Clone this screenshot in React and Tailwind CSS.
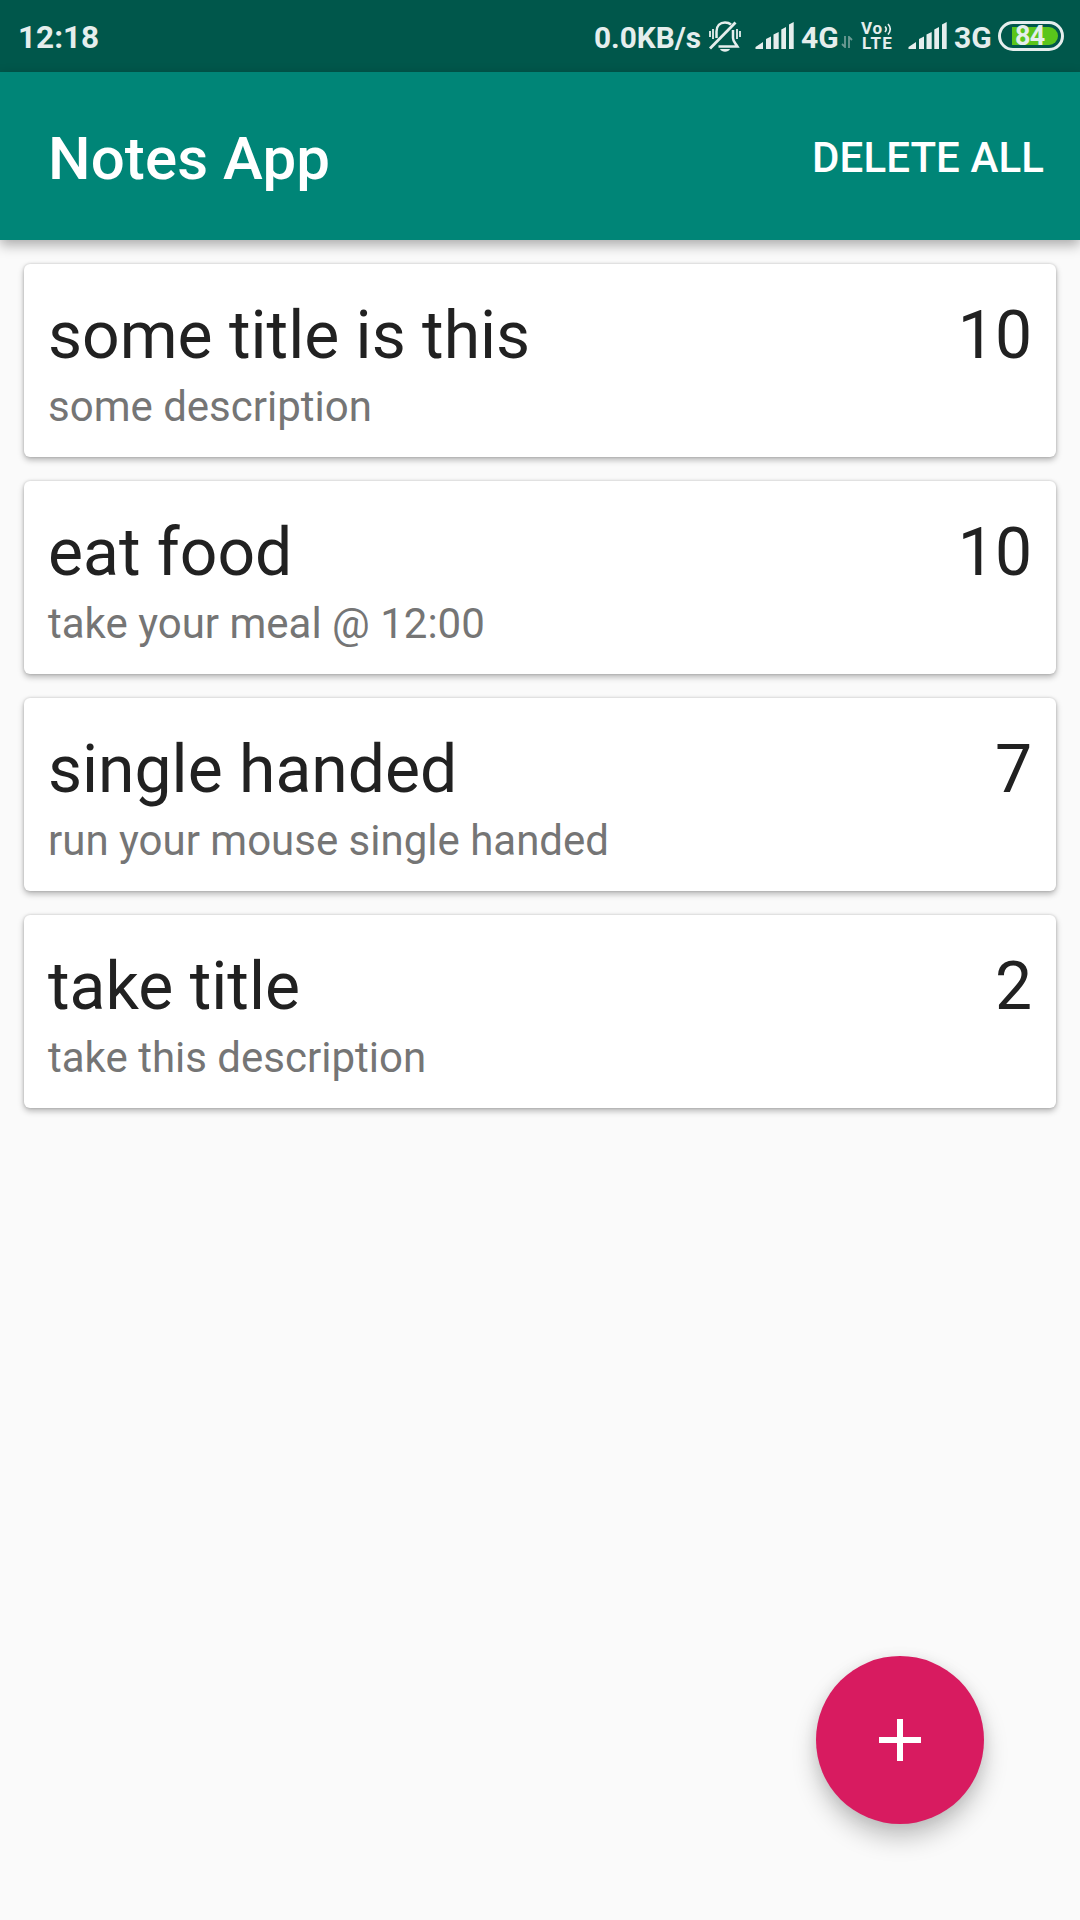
const notes = [
  { title: "some title is this", description: "some description", priority: 10 },
  { title: "eat food", description: "take your meal @ 12:00", priority: 10 },
  { title: "single handed", description: "run your mouse single handed", priority: 7 },
  { title: "take title", description: "take this description", priority: 2 },
];

function MutedBell() {
  return (
    <svg className="h-8 w-[34px]" viewBox="0 0 34 32" fill="none" stroke="#e5eeed" strokeWidth="2.500">
      <path d="M7.500 17V10.500C7.500 5 11 1.500 16 1.500C18.500 1.500 20.500 2.200 22 3.500M24 9V17C24 21 26.500 22 28.500 25.500H9.500" />
      <path d="M1 27.500L26.500 1.500" strokeWidth="2.800" />
      <path d="M1 10V16M4 8V18M28 8V18M31 10V16" strokeWidth="1.800" />
      <path d="M11 28H21C19.500 31.500 12.500 31.500 11 28Z" fill="#e5eeed" stroke="none" />
    </svg>
  );
}

function Signal() {
  return (
    <svg className="h-7 w-10" viewBox="0 0 40 28" fill="#e5eeed">
      <path d="M.5 27V25L8 20V27ZM11 27V17L16 14.500V27ZM18.500 27V12.500L23.700 10V27ZM26.300 27V7.500L31 5V27ZM34 27V2.500L38.700 0V27Z" />
    </svg>
  );
}

function StatusBar() {
  return (
    <div className="flex h-[72px] items-center bg-[#00574b] pr-4 pl-[18px] text-[30px] leading-none font-bold text-[#e5eeed]">
      <span className="flex-1 pt-[3px] text-[31.500px]">12:18</span>
      <span className="flex w-[115px] shrink-0 pt-[3px] text-[29.800px]">0.0KB/s</span>
      <span className="flex w-[46px] shrink-0 pt-[1px]"><MutedBell /></span>
      <span className="flex w-[46px] shrink-0"><Signal /></span>
      <span className="flex w-10 shrink-0 pt-[3px]">4G</span>
      <svg className="mt-3 mr-2 h-3 w-3 shrink-0" viewBox="0 0 12 12" fill="none" stroke="#6d9b94" strokeWidth="1.800">
        <path d="M4 0V11L1 8M8 12V1L11 4" />
      </svg>
      <span className="flex w-[47px] shrink-0 flex-col text-[17px] leading-[15px]">
        <span className="flex items-center gap-px tracking-[0.800px]">
          Vo
          <svg className="h-3 w-2 shrink-0" viewBox="0 0 8 12" fill="none" stroke="#e5eeed" strokeWidth="1.700">
            <path d="M1 3.500Q3.500 6 1 9M4 1Q8.500 6 4 11.500" />
          </svg>
        </span>
        <span className="pl-px tracking-[1.200px]">LTE</span>
      </span>
      <span className="flex w-[46px] shrink-0"><Signal /></span>
      <span className="flex w-11 shrink-0 pt-[3px]">3G</span>
      <span className="flex h-[30px] w-[66px] shrink-0 items-center rounded-full border-[3px] border-[#e5eeed]">
        <span className="ml-[11px] flex h-[18px] w-[46px] items-center rounded-l-[2px] rounded-r-full bg-[#5ac51b] pl-[3px] text-[27px] tracking-[-0.800px]">84</span>
      </span>
    </div>
  );
}

export default function App() {
  return (
    <div className="relative h-[1920px] w-[1080px] overflow-hidden bg-[#fafafa] font-['Roboto',sans-serif]">
      <StatusBar />
      <header className="flex h-[168px] items-center justify-between bg-[#008577] pr-9 pl-12 text-white shadow-[0_5px_12px_rgba(0,0,0,0.32)]">
        <h1 className="pt-[6px] text-[60px] font-medium tracking-[0.100px]">Notes App</h1>
        <button className="pt-[2px] text-[42px] font-medium tracking-[0.100px]">DELETE ALL</button>
      </header>
      <main className="flex flex-col gap-6 p-6">
        {notes.map((note) => (
          <article key={note.title} className="flex h-[193px] justify-between rounded-[6px] bg-white p-6 shadow-[0_3px_6px_rgba(0,0,0,0.28),0_0_3px_rgba(0,0,0,0.18)]">
            <div>
              <h2 className="mt-[9px] text-[66px] leading-[77px] text-[#212121]">{note.title}</h2>
              <p className="mt-2 text-[42px] leading-[50px] text-[#757575]">{note.description}</p>
            </div>
            <span className="mt-[9px] text-[66px] leading-[77px] text-[#212121]">{note.priority}</span>
          </article>
        ))}
      </main>
      <button aria-label="Add note" className="absolute top-[1656px] left-[816px] flex size-[168px] items-center justify-center rounded-full bg-[#d81b60] shadow-[0_14px_24px_rgba(0,0,0,0.22),0_2px_14px_rgba(0,0,0,0.08)]">
        <svg className="size-[42px]" viewBox="0 0 42 42" stroke="white" strokeWidth="6">
          <path d="M21 0V42M0 21H42" />
        </svg>
      </button>
    </div>
  );
}
